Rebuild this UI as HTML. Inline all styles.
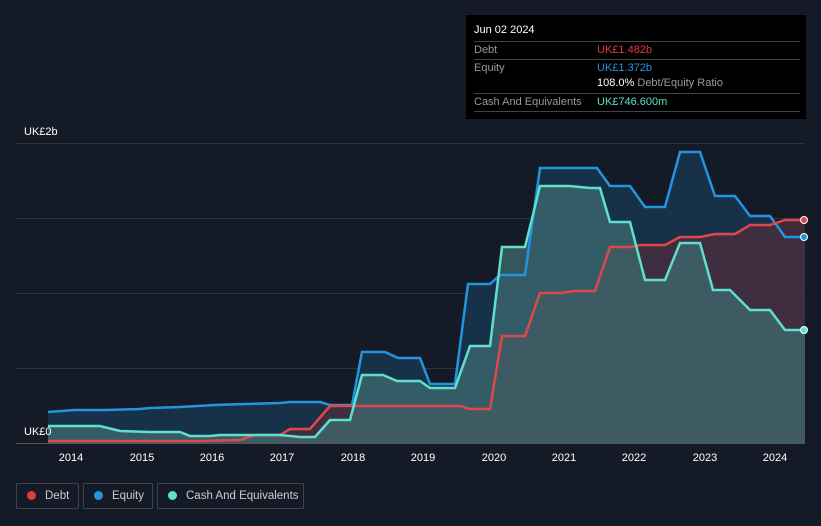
<!DOCTYPE html>
<html><head><style>
body{margin:0;background:#151b26;width:821px;height:526px;overflow:hidden;font-family:"Liberation Sans",sans-serif;position:relative}
.tt{position:absolute;left:466px;top:15px;width:340px;height:104px;background:#000;color:#fff;font-size:11px}
.row{position:absolute;left:8px;width:326px;border-top:1px solid #444;height:17px;line-height:17px}
.l{color:#999;position:absolute;left:0}.v{position:absolute;left:123px}
.leg{position:absolute;top:483px;height:26px;border:1px solid #3c434f;border-radius:2px;color:#ccc;font-size:11.5px;line-height:24px;box-sizing:border-box;white-space:nowrap}
.leg i{display:inline-block;width:9px;height:9px;border-radius:50%;margin:0 9px 0 10px;vertical-align:-1px}
</style></head><body>
<svg width="821" height="526" style="position:absolute;left:0;top:0">
<g stroke="#2c333e" stroke-width="1"><line x1="16" x2="805" y1="143.5" y2="143.5"/><line x1="16" x2="805" y1="218.5" y2="218.5"/><line x1="16" x2="805" y1="293.5" y2="293.5"/><line x1="16" x2="805" y1="368.5" y2="368.5"/></g>
<line x1="16" x2="805" y1="443.5" y2="443.5" stroke="#555"/>
<polygon fill="#16344c" opacity=".9" points="48,412 75,410 105,410 140,409 150,408 180,407 215,405 245,404 280,403 290,402 320,402 330,405 352,405 362,352 385,352 398,358 420,358 430,384 455,384 468,284 490,284 500,275 525,275 540,168 597,168 610,186 630,186 645,207 665,207 680,152 700,152 715,196 735,196 750,216 770,216 785,237 805,237 805,443 48,443"/>
<polygon fill="#4a2e3e" opacity=".8" points="48,441 200,441 240,440 255,435 280,435 290,429 310,429 330,406 460,406 470,409 490,409 502,336 525,336 540,293 560,293 575,291 595,291 610,247 630,247 640,245 665,245 680,237 700,237 715,234 735,234 750,225 770,225 785,220 805,220 805,443 48,443"/>
<polygon fill="#3f6b70" opacity=".75" points="48,426 100,426 120,431 150,432 180,432 190,436 210,436 220,435 280,435 300,437 315,437 330,420 350,420 362,375 383,375 397,381 420,381 430,388 455,388 470,346 490,346 502,247 525,247 540,186 570,186 590,188 600,188 610,222 630,222 645,280 665,280 680,243 700,243 713,290 730,290 750,310 770,310 785,330 805,330 805,443 48,443"/>
<g fill="none" stroke-width="2.5">
<polyline stroke="#2394df" points="48,412 75,410 105,410 140,409 150,408 180,407 215,405 245,404 280,403 290,402 320,402 330,405 352,405 362,352 385,352 398,358 420,358 430,384 455,384 468,284 490,284 500,275 525,275 540,168 597,168 610,186 630,186 645,207 665,207 680,152 700,152 715,196 735,196 750,216 770,216 785,237 805,237"/>
<polyline stroke="#e0474c" points="48,441 200,441 240,440 255,435 280,435 290,429 310,429 330,406 460,406 470,409 490,409 502,336 525,336 540,293 560,293 575,291 595,291 610,247 630,247 640,245 665,245 680,237 700,237 715,234 735,234 750,225 770,225 785,220 805,220"/>
<polyline stroke="#5ee0cc" points="48,426 100,426 120,431 150,432 180,432 190,436 210,436 220,435 280,435 300,437 315,437 330,420 350,420 362,375 383,375 397,381 420,381 430,388 455,388 470,346 490,346 502,247 525,247 540,186 570,186 590,188 600,188 610,222 630,222 645,280 665,280 680,243 700,243 713,290 730,290 750,310 770,310 785,330 805,330"/>
</g>
<circle cx="804" cy="220" r="3.5" fill="#e0474c" stroke="#fff" stroke-width="1"/>
<circle cx="804" cy="237" r="3.5" fill="#2394df" stroke="#fff" stroke-width="1"/>
<circle cx="804" cy="330" r="3.5" fill="#5ee0cc" stroke="#fff" stroke-width="1"/>
<g fill="#fff" font-size="11" font-family="Liberation Sans,sans-serif">
<text x="24" y="135">UK£2b</text><text x="24" y="435">UK£0</text>
<g text-anchor="middle"><text x="71" y="461">2014</text><text x="142" y="461">2015</text><text x="212" y="461">2016</text><text x="282" y="461">2017</text><text x="353" y="461">2018</text><text x="423" y="461">2019</text><text x="494" y="461">2020</text><text x="564" y="461">2021</text><text x="634" y="461">2022</text><text x="705" y="461">2023</text><text x="775" y="461">2024</text></g>
</g>
</svg>
<div class="tt">
<div style="position:absolute;left:8px;top:9px">Jun 02 2024</div>
<div class="row" style="top:26px"><span class="l">Debt</span><span class="v" style="color:#e3393f">UK£1.482b</span></div>
<div class="row" style="top:44px"><span class="l">Equity</span><span class="v" style="color:#2394df">UK£1.372b</span></div>
<div style="position:absolute;left:131px;top:62px">108.0% <span style="color:#999">Debt/Equity Ratio</span></div>
<div class="row" style="top:78px"><span class="l">Cash And Equivalents</span><span class="v" style="color:#5ee0cc">UK£746.600m</span></div>
<div class="row" style="top:96px;height:0"></div>
</div>
<div class="leg" style="left:16px;width:63px"><i style="background:#e3393f"></i>Debt</div>
<div class="leg" style="left:83px;width:70px"><i style="background:#2394df"></i>Equity</div>
<div class="leg" style="left:157px;width:147px"><i style="background:#5ee0cc"></i>Cash And Equivalents</div>
</body></html>
